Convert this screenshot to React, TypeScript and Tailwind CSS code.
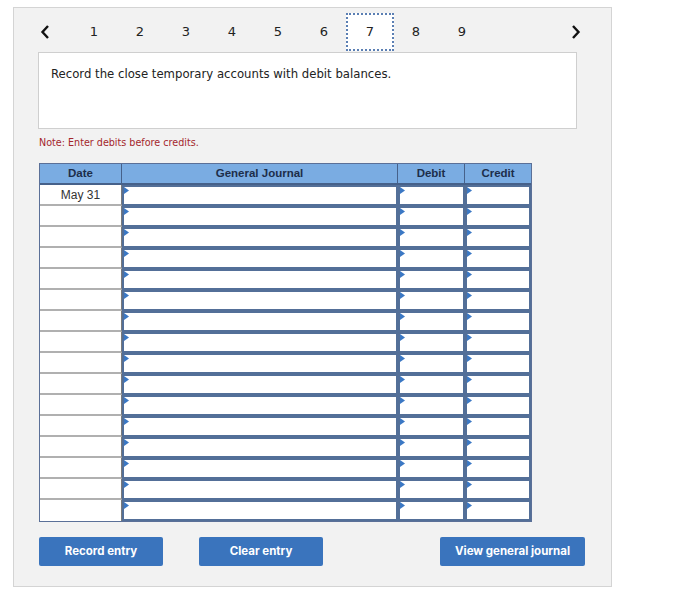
import React from "react";

const Tri = () => (
  <svg className="absolute left-0 top-0" width="5" height="8" viewBox="0 0 5 8">
    <polygon points="0,0 5,3.5 0,7" fill="#3b78c4" />
  </svg>
);

const InputCell = ({ w }: { w: string }) => (
  <div className={`relative ${w} h-full bg-white border-2 border-[#536f98]`}>
    <Tri />
  </div>
);

export default function App() {
  const rows = Array.from({ length: 16 }, (_, i) => i);
  const nums = [1, 2, 3, 4, 5, 6, 7, 8, 9];
  return (
    <div className="w-[700px] h-[599px] bg-white pt-[7px] pl-[13px]" style={{ fontFamily: "'DejaVu Sans', Verdana, sans-serif" }}>
      <div className="w-[599px] h-[580px] bg-[#f2f2f2] border border-[#d4d4d4] relative">
        {/* nav */}
        <div className="flex items-center h-[44px] pt-[3px]">
          <div className="w-[57px] flex justify-end pr-[21px]">
            <svg width="10" height="16" viewBox="0 0 10 16">
              <path d="M8 2 L2.5 8 L8 14" stroke="#111" strokeWidth="2.4" fill="none" />
            </svg>
          </div>
          <div className="flex">
            {nums.map((n) =>
              n === 7 ? (
                <div
                  key={n}
                  className="w-[48px] h-[38px] -mx-[1px] flex items-center justify-center bg-white border-2 border-dotted border-[#5b7fb3] text-[13px] text-[#222]"
                >
                  {n}
                </div>
              ) : (
                <div key={n} className="w-[46px] h-[38px] flex items-center justify-center text-[13px] text-[#222]">
                  {n}
                </div>
              )
            )}
          </div>
          <div className="ml-[86px]">
            <svg width="10" height="16" viewBox="0 0 10 16">
              <path d="M2 2 L7.5 8 L2 14" stroke="#111" strokeWidth="2.4" fill="none" />
            </svg>
          </div>
        </div>
        {/* question */}
        <div className="ml-[24px] w-[539px] h-[77px] bg-white border border-[#cfcfcf] px-[12px] pt-[13px] text-[11.7px] text-[#222]">
          Record the close temporary accounts with debit balances.
        </div>
        <div className="ml-[25px] mt-[7px] text-[9.6px] text-[#a4262c]">Note: Enter debits before credits.</div>
        {/* table */}
        <div className="ml-[25px] mt-[13px] w-[493px] border border-[#5b7098]" style={{ fontFamily: "'Liberation Sans', Arial, sans-serif" }}>
          <div className="flex h-[21px] bg-[#7aace2] border-b-2 border-[#46618a] text-[11.5px] font-bold text-[#1d2e4a]">
            <div className="w-[82px] flex items-center justify-center border-r border-[#46618a]">Date</div>
            <div className="w-[276px] flex items-center justify-center border-r border-[#46618a]">General Journal</div>
            <div className="w-[67px] flex items-center justify-center border-r border-[#46618a]">Debit</div>
            <div className="flex-1 flex items-center justify-center">Credit</div>
          </div>
          {rows.map((i) => (
            <div key={i} className="flex h-[21px]">
              <div className={`w-[82px] h-full bg-white flex items-center justify-center text-[12px] text-[#333] border-r border-[#7a7a7a] ${i < 15 ? "border-b-2 border-b-[#b0b0b0]" : ""}`}>
                {i === 0 ? "May 31" : ""}
              </div>
              <InputCell w="w-[276px]" />
              <InputCell w="w-[67px]" />
              <InputCell w="flex-1" />
            </div>
          ))}
        </div>
        {/* buttons */}
        <div className="flex ml-[25px] mt-[15px] text-[11.5px] font-bold text-white" style={{ fontFamily: "Inter, 'Liberation Sans', sans-serif" }}>
          <button className="w-[124px] h-[29px] rounded-[2px] bg-[#3a74bd]">Record entry</button>
          <button className="ml-[36px] w-[124px] h-[29px] rounded-[2px] bg-[#3a74bd]">Clear entry</button>
          <button className="ml-[117px] w-[145px] h-[29px] rounded-[2px] bg-[#3a74bd]">View general journal</button>
        </div>
      </div>
    </div>
  );
}
